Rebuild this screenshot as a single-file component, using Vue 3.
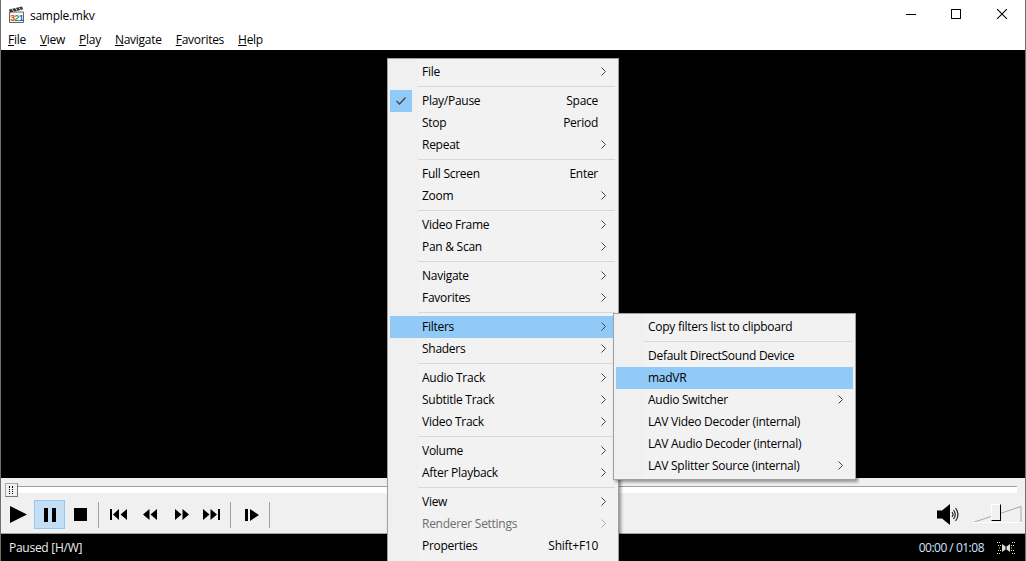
<template>
  <div class="player">
    <!-- Title bar -->
    <div class="titlebar">
      <svg class="app-icon" width="17" height="17" viewBox="0 0 17 17">
        <path d="M1.500 6H15.500V16.500H1.500Z" fill="#f8f8f8" stroke="#666" />
        <path d="M1 3.500L14 .5L15 3.500L2 6.500Z" fill="#333" />
        <path d="M4 3L5.500 5.500M7.500 2L9 4.600M11 1.500L12.500 3.800" stroke="#ddd" />
        <text x="2" y="14.500" class="icon-num n3">3</text>
        <text x="6.300" y="14.500" class="icon-num n2">2</text>
        <text x="10.800" y="14.500" class="icon-num n1">1</text>
      </svg>
      <span class="title-text">sample.mkv</span>
      <div class="win-buttons">
        <svg width="10" height="10" viewBox="0 0 10 10"><path d="M0 5.500H10" stroke="#000" /></svg>
        <svg width="10" height="10" viewBox="0 0 10 10"><rect x=".5" y=".5" width="9" height="9" fill="none" stroke="#000" /></svg>
        <svg class="win-close" width="10" height="10" viewBox="0 0 10 10"><path d="M0 0L10 10M10 0L0 10" stroke="#000" stroke-width="1.100" /></svg>
      </div>
    </div>

    <!-- Menu bar -->
    <div class="menubar">
      <span v-for="m in topMenu" :key="m.rest" class="top-item"><u>{{ m.key }}</u>{{ m.rest }}</span>
    </div>

    <div class="video"></div>

    <!-- Seek bar -->
    <div class="seekbar">
      <div class="seek-track"></div>
      <div class="seek-thumb"><i></i></div>
    </div>

    <!-- Toolbar -->
    <div class="toolbar">
      <button class="tb tb-play">
        <svg width="17" height="17" viewBox="0 0 17 17"><path d="M0 0L17 8.500L0 17Z" /></svg>
      </button>
      <button class="tb tb-pause">
        <svg width="12" height="14" viewBox="0 0 12 14"><path d="M0 0H4V14H0ZM8 0H12V14H8Z" /></svg>
      </button>
      <button class="tb tb-stop">
        <svg width="13" height="13" viewBox="0 0 13 13"><rect width="13" height="13" /></svg>
      </button>
      <span class="sep sep-a"></span>
      <button class="tb tb-prev">
        <svg width="17" height="11" viewBox="0 0 17 11"><path d="M0 0H2V11H0ZM3 5.500L9 0V11ZM10.500 5.500L17 0V11Z" /></svg>
      </button>
      <button class="tb tb-rew">
        <svg width="14" height="11" viewBox="0 0 14 11"><path d="M0 5.500L6.500 0V11ZM7.500 5.500L14 0V11Z" /></svg>
      </button>
      <button class="tb tb-ff">
        <svg width="14" height="11" viewBox="0 0 14 11"><path d="M0 0L6.500 5.500L0 11ZM7.500 0L14 5.500L7.500 11Z" /></svg>
      </button>
      <button class="tb tb-next">
        <svg width="17" height="11" viewBox="0 0 17 11"><path d="M0 0L6.500 5.500L0 11ZM7.500 0L14 5.500L7.500 11ZM15 0H17V11H15Z" /></svg>
      </button>
      <span class="sep sep-b"></span>
      <button class="tb tb-step">
        <svg width="14" height="12" viewBox="0 0 14 12"><path d="M0 0H3V12H0ZM5 0L14 6L5 12Z" /></svg>
      </button>
      <span class="sep sep-c"></span>

      <svg class="speaker" width="23" height="21" viewBox="0 0 23 21">
        <path d="M0 6.500H5L13 0V21L5 14.500H0Z" fill="#000" />
        <path d="M15 8Q17 10.500 15 13M16.500 6Q20 10.500 16.500 15M18.500 4Q23.500 10.500 18.500 17" fill="none" stroke="#222" stroke-width="1.200" />
      </svg>
      <div class="volume">
        <svg width="49" height="17" viewBox="0 0 49 17">
          <path d="M0 16.500L48 .5V16" fill="none" stroke="#a8a8a8" />
          <path d="M0 16.500H49" stroke="#fff" />
        </svg>
        <div class="vol-thumb"></div>
      </div>
    </div>

    <!-- Status bar -->
    <div class="statusbar">
      <span>Paused [H/W]</span>
      <span class="time">00:00 / 01:08</span>
      <svg class="sig" width="20" height="12" viewBox="0 0 20 12">
        <path d="M1 .5H4M2 3.500H5M3 6H5M2 8.500H5M1 11.500H4M16 .5H19M15 3.500H18M15 6H17M15 8.500H18M16 11.500H19" stroke="#ffe680" stroke-dasharray="1 1" />
        <path d="M6 2L9.500 4.500V7.500L6 10ZM14 2L10.500 4.500V7.500L14 10Z" fill="#ddd" />
      </svg>
    </div>

    <!-- Context menu -->
    <div class="menu main-menu">
      <template v-for="(item, i) in mainMenu" :key="i">
        <div v-if="item.sep" class="menu-sep"></div>
        <div v-else :class="['menu-item', { active: item.active, disabled: item.disabled }]">
          <span v-if="item.checked" class="check">
            <svg width="12" height="10" viewBox="0 0 12 10"><path d="M1.500 5L4.500 8L10.500 1.500" fill="none" stroke="#444" stroke-width="1.300" /></svg>
          </span>
          <span class="label">{{ item.label }}</span>
          <span v-if="item.shortcut" class="shortcut">{{ item.shortcut }}</span>
          <svg v-if="item.sub" class="arrow" width="5" height="9" viewBox="0 0 5 9"><path d="M.5 .5L4.500 4.500L.5 8.500" fill="none" :stroke="item.disabled ? '#aaa' : '#444'" /></svg>
        </div>
      </template>
    </div>

    <!-- Filters submenu -->
    <div class="menu sub-menu">
      <template v-for="(item, i) in filterMenu" :key="i">
        <div v-if="item.sep" class="menu-sep"></div>
        <div v-else :class="['menu-item', { active: item.active }]">
          <span class="label">{{ item.label }}</span>
          <svg v-if="item.sub" class="arrow" width="5" height="9" viewBox="0 0 5 9"><path d="M.5 .5L4.500 4.500L.5 8.500" fill="none" stroke="#444" /></svg>
        </div>
      </template>
    </div>
  </div>
</template>

<script setup>
const topMenu = [
  { key: 'F', rest: 'ile' },
  { key: 'V', rest: 'iew' },
  { key: 'P', rest: 'lay' },
  { key: 'N', rest: 'avigate' },
  { key: 'F', rest: 'avorites' },
  { key: 'H', rest: 'elp' }
]

const sep = { sep: true }

const mainMenu = [
  { label: 'File', sub: true },
  sep,
  { label: 'Play/Pause', shortcut: 'Space', checked: true },
  { label: 'Stop', shortcut: 'Period' },
  { label: 'Repeat', sub: true },
  sep,
  { label: 'Full Screen', shortcut: 'Enter' },
  { label: 'Zoom', sub: true },
  sep,
  { label: 'Video Frame', sub: true },
  { label: 'Pan & Scan', sub: true },
  sep,
  { label: 'Navigate', sub: true },
  { label: 'Favorites', sub: true },
  sep,
  { label: 'Filters', sub: true, active: true },
  { label: 'Shaders', sub: true },
  sep,
  { label: 'Audio Track', sub: true },
  { label: 'Subtitle Track', sub: true },
  { label: 'Video Track', sub: true },
  sep,
  { label: 'Volume', sub: true },
  { label: 'After Playback', sub: true },
  sep,
  { label: 'View', sub: true },
  { label: 'Renderer Settings', sub: true, disabled: true },
  { label: 'Properties', shortcut: 'Shift+F10' }
]

const filterMenu = [
  { label: 'Copy filters list to clipboard' },
  sep,
  { label: 'Default DirectSound Device' },
  { label: 'madVR', active: true },
  { label: 'Audio Switcher', sub: true },
  { label: 'LAV Video Decoder (internal)' },
  { label: 'LAV Audio Decoder (internal)' },
  { label: 'LAV Splitter Source (internal)', sub: true }
]
</script>

<style scoped>
.player {
  position: relative;
  width: 1026px;
  height: 561px;
  overflow: hidden;
  display: flex;
  flex-direction: column;
  background: #fff;
  font-family: "Open Sans", "Noto Sans", sans-serif;
  font-size: 12px;
  letter-spacing: -0.27px;
  color: #000;
  box-sizing: border-box;
  border-left: 1px solid #6f6f6f;
  border-right: 1px solid #6f6f6f;
}

.titlebar {
  height: 30px;
  display: flex;
  align-items: center;
  padding-left: 7px;
  padding-bottom: 2px;
  box-sizing: border-box;
}

.app-icon {
  margin-right: 5px;
}

.icon-num {
  font-family: "Liberation Sans", sans-serif;
  font-size: 9px;
  font-weight: 700;
  letter-spacing: 0;
}

.n3 { fill: #e0481c; }
.n2 { fill: #2f9a3a; }
.n1 { fill: #1f5ed0; }

.title-text {
  margin-top: 2px;
}

.win-buttons {
  margin-left: auto;
  display: flex;
  align-items: center;
  gap: 35px;
  padding-right: 18px;
}

.win-close {
  margin-left: 1px;
}

.menubar {
  height: 20px;
  display: flex;
  gap: 14px;
  padding-left: 7px;
  padding-bottom: 1px;
  box-sizing: border-box;
  align-items: center;
}

.video {
  flex: 1;
  background: #000;
}

.seekbar {
  position: relative;
  height: 21px;
  background: #f0f0f0;
  padding: 8px 8px 0 6px;
  box-sizing: border-box;
}

.seek-track {
  height: 7px;
  background: #fff;
  border-top: 1px solid #a0a0a0;
  box-sizing: border-box;
}

.seek-thumb {
  position: absolute;
  left: 4px;
  top: 5px;
  width: 13px;
  height: 14px;
  box-sizing: border-box;
  background: #f0f0f0;
  border: 1px solid #aaa;
  border-right-color: #777;
  border-bottom-color: #777;
}

.seek-thumb i {
  display: block;
  width: 2px;
  height: 8px;
  margin: 2px 0 0 3px;
  border-left: 1px dotted #000;
  border-right: 1px dotted #000;
}

.toolbar {
  height: 35px;
  display: flex;
  align-items: center;
  background: #f0f0f0;
  border-bottom: 1px solid #a0a0a0;
  box-sizing: border-box;
  padding-left: 9px;
  padding-bottom: 3px;
}

.tb {
  border: 0;
  padding: 0;
  background: none;
  display: flex;
  align-items: center;
  justify-content: center;
  height: 29px;
}

.tb svg {
  fill: #000;
  display: block;
}

.tb-play { width: 17px; margin-right: 7px; }
.tb-pause {
  width: 31px;
  background: #c4def3;
  border: 1px solid #90c8f6;
  box-sizing: border-box;
  margin-right: 9px;
}
.tb-stop { width: 13px; }
.sep {
  width: 1px;
  height: 26px;
  background: #a0a0a0;
}
.sep-a { margin: 0 11px 0 11px; }
.tb-prev { width: 17px; }
.tb-rew { width: 14px; margin-left: 16px; }
.tb-ff { width: 14px; margin-left: 18px; }
.tb-next { width: 17px; margin-left: 14px; }
.sep-b { margin: 0 14px 0 10px; }
.tb-step { width: 14px; }
.sep-c { margin-left: 10px; }

.speaker {
  margin-left: auto;
}

.volume {
  position: relative;
  width: 49px;
  height: 17px;
  margin-left: 13px;
  margin-right: 3px;
}

.volume svg {
  display: block;
}

.vol-thumb {
  position: absolute;
  left: 18px;
  top: -2px;
  width: 10px;
  height: 17px;
  background: #f0f0f0;
  border-left: 1px solid #fff;
  border-top: 1px solid #fff;
  border-right: 1px solid #000;
  border-bottom: 1px solid #000;
  box-sizing: border-box;
}

.statusbar {
  height: 27px;
  background: #000;
  color: #eee;
  display: flex;
  align-items: center;
  padding-left: 8px;
  padding-right: 9px;
}

.time {
  margin-left: auto;
  margin-right: 12px;
  color: #cfe6ff;
  letter-spacing: -0.5px;
}

.menu {
  position: absolute;
  box-sizing: border-box;
  background: linear-gradient(90deg, #f0f0f0 0 30px, #f2f2f2 30px);
  border: 1px solid #a0a0a0;
  padding: 2px;
  box-shadow: 2px 2px 3px rgba(0, 0, 0, 0.4);
}

.main-menu {
  left: 386px;
  top: 58px;
  width: 232px;
  padding-bottom: 6px;
}

.sub-menu {
  left: 612px;
  top: 313px;
  width: 243px;
}

.menu-item {
  position: relative;
  height: 22px;
  display: flex;
  align-items: center;
  box-sizing: border-box;
  padding-left: 32px;
  padding-right: 18px;
  padding-bottom: 2px;
}

.menu-item.active {
  background: #91c9f7;
}

.menu-item.disabled {
  color: #6d6d6d;
}

.check {
  position: absolute;
  left: 0;
  top: 0;
  width: 22px;
  height: 22px;
  background: #91c9f7;
  display: flex;
  align-items: center;
  justify-content: center;
}

.shortcut {
  margin-left: auto;
}

.arrow {
  position: absolute;
  right: 10px;
  top: 6px;
}

.menu-sep {
  height: 1px;
  margin: 3px 1px 3px 28px;
  background: #d7d7d7;
}
</style>

<style>
html, body {
  margin: 0;
  background: #000;
}
</style>
